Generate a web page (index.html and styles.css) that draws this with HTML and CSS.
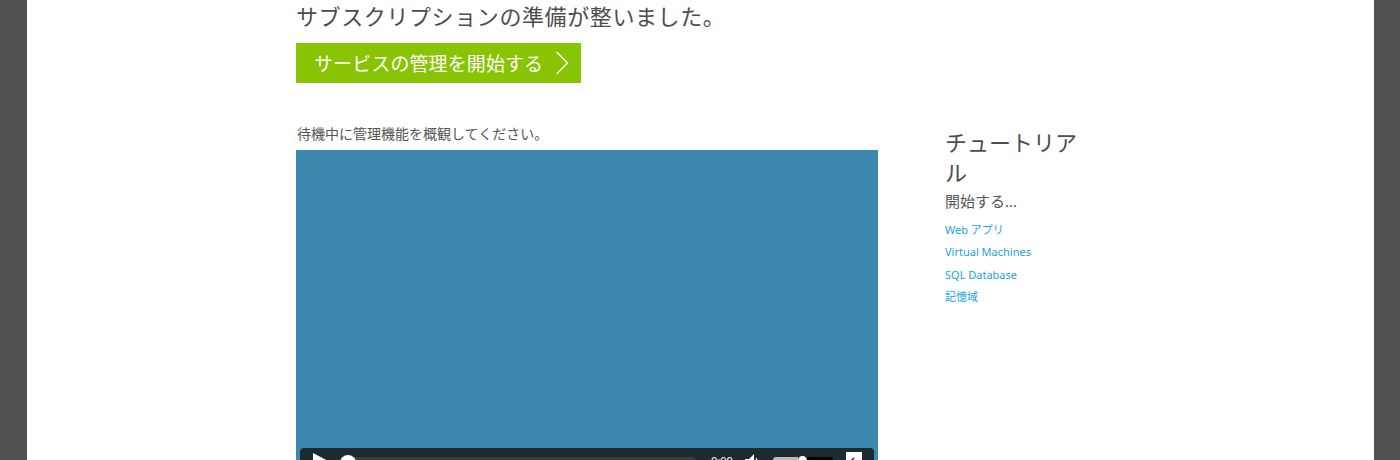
FILE: index.html
```html
<!DOCTYPE html>
<html lang="ja">
<head>
<meta charset="utf-8">
<link rel="stylesheet" href="styles.css">
</head>
<body>
<div class="page">
  <div class="content">
    <h1 class="title">サブスクリプションの準備が整いました。</h1>
    <a class="cta" href="#">サービスの管理を開始する<svg class="chev" width="14" height="24" viewBox="0 0 14 24"><path d="M1.5 1 L12.5 12 L1.5 23" fill="none" stroke="#fff" stroke-width="1.4"/></svg></a>
    <div class="row">
      <div class="main">
        <p class="intro">待機中に管理機能を概観してください。</p>
        <div class="video">
          <div class="controls">
            <svg class="play" width="18" height="18" viewBox="0 0 18 18"><path d="M0 0 L17 9 L0 18 Z" fill="#fff"/></svg>
            <span class="knob"></span>
            <span class="track"></span>
            <span class="time">0:00</span>
            <svg class="vol" width="16" height="14" viewBox="0 0 16 14"><path d="M0 5 H4 L9 0 V14 H0 Z" fill="#fff"/><path d="M11 4 Q13 7 11 11" fill="none" stroke="#fff" stroke-width="1.2"/></svg>
            <span class="volbar"><span class="volfill"></span><span class="volknob"></span></span>
            <svg class="fs" width="16" height="14" viewBox="0 0 16 14"><rect x="0" y="0" width="16" height="14" fill="#fff"/><path d="M3 11 L8 6" stroke="#1d2a30" stroke-width="1.5"/></svg>
          </div>
        </div>
      </div>
      <aside class="side">
        <h2 class="side-title">チュートリアル</h2>
        <p class="side-sub">開始する...</p>
        <ul class="links">
          <li><a href="#">Web アプリ</a></li>
          <li><a href="#">Virtual Machines</a></li>
          <li><a href="#">SQL Database</a></li>
          <li><a href="#">記憶域</a></li>
        </ul>
      </aside>
    </div>
  </div>
</div>
</body>
</html>
```

FILE: styles.css
```css
html, body {
  margin: 0;
  padding: 0;
  height: 100%;
  overflow: hidden;
}
body {
  background: #525252;
  font-family: "Noto Sans", "Noto Sans CJK JP", sans-serif;
}
.page {
  margin-left: 27px;
  width: 1347px;
  height: 460px;
  background: #fff;
  overflow: hidden;
}
.content {
  padding-left: 269px;
  padding-top: 1px;
}
.title {
  margin: 0;
  font-size: 22px;
  line-height: 30px;
  font-weight: normal;
  color: #4d4d4d;
  letter-spacing: 0.6px;
}
.cta {
  display: inline-flex;
  align-items: center;
  margin-top: 12px;
  height: 40px;
  width: 285px;
  box-sizing: border-box;
  padding-left: 18px;
  background: #89c402;
  color: #fff;
  text-decoration: none;
  font-size: 19px;
  letter-spacing: 0.1px;
}
.chev {
  margin-left: 12px;
}
.row {
  display: flex;
  margin-top: 42px;
}
.main {
  width: 582px;
}
.intro {
  margin: 0 0 7px 1px;
  font-size: 14px;
  line-height: 18px;
  color: #555;
}
.video {
  height: 330px;
  background: #3d88ae;
  padding: 298px 4px 0 4px;
  box-sizing: border-box;
}
.controls {
  display: flex;
  align-items: flex-start;
  height: 30px;
  box-sizing: border-box;
  background: #1d2a30;
  border-radius: 4px;
  padding: 5px 11px 0 13px;
}
.play {
  margin-right: 9px;
}
.knob {
  width: 16px;
  height: 16px;
  margin-top: 2px;
  border-radius: 50%;
  background: #fff;
  margin-right: -4px;
  position: relative;
  z-index: 1;
}
.track {
  flex: 0 0 344px;
  height: 8px;
  margin-top: 4px;
  background: #3c3c3c;
  border-radius: 4px;
}
.time {
  color: #fff;
  font-size: 11px;
  line-height: 15px;
  margin-left: 15px;
  width: 25px;
}
.vol {
  margin-left: 9px;
  margin-top: 1px;
}
.volbar {
  display: flex;
  align-items: center;
  margin-left: 12px;
  margin-top: 4px;
  width: 60px;
  height: 6px;
  background: #000;
  border-radius: 3px;
}
.volfill {
  width: 25px;
  height: 6px;
  background: #bbb;
  border-radius: 3px 0 0 3px;
}
.volknob {
  width: 9px;
  height: 9px;
  border-radius: 50%;
  background: #fff;
}
.fs {
  margin-left: 13px;
  margin-top: -1px;
}
.side {
  margin-left: 67px;
  width: 136px;
  padding-top: 2px;
}
.side-title {
  margin: 0;
  font-size: 22px;
  line-height: 30px;
  font-weight: normal;
  color: #4d4d4d;
}
.side-sub {
  margin: 4px 0 8px;
  font-size: 15px;
  line-height: 20px;
  color: #555;
}
.links {
  list-style: none;
  margin: 0;
  padding: 0;
}
.links li {
  font-size: 11px;
  line-height: 22.3px;
}
.links a {
  color: #1ba1e2;
  text-decoration: none;
}
```
